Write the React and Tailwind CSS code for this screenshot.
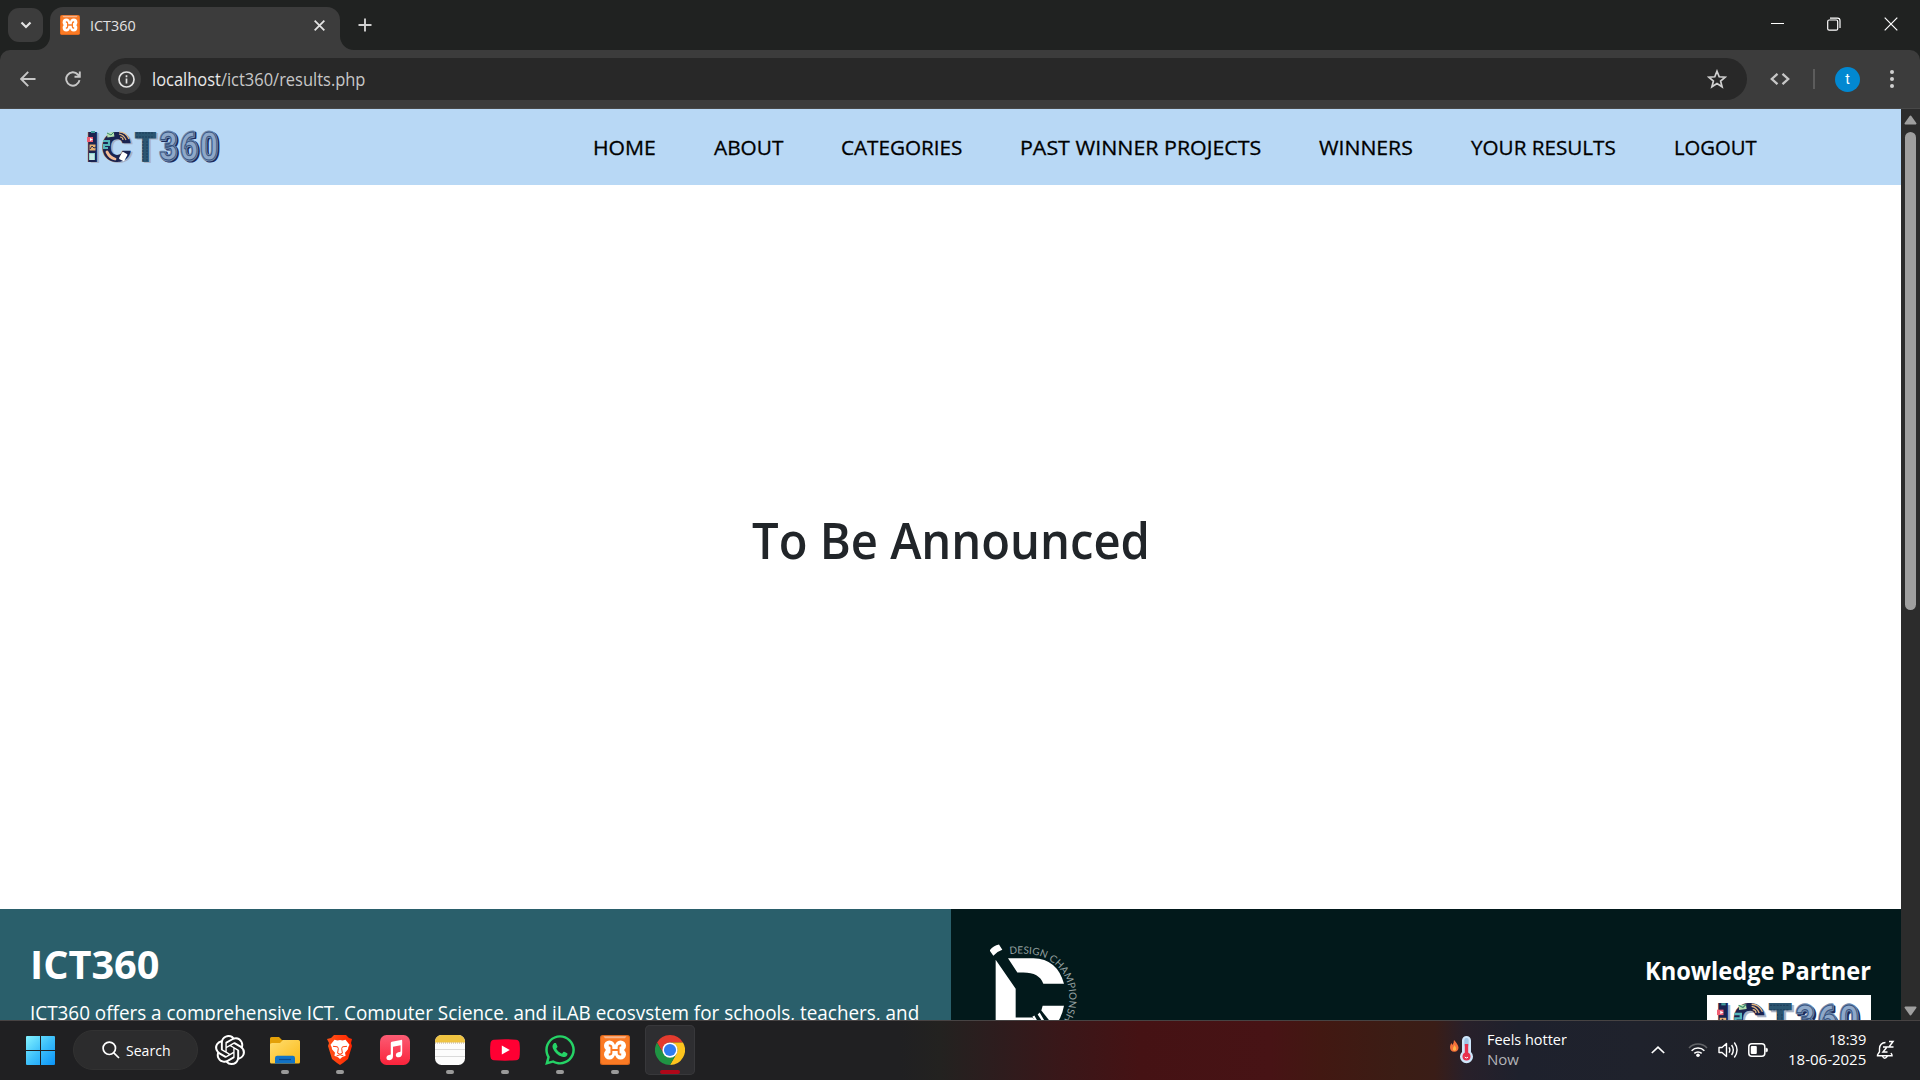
import { useLayoutEffect, useRef, useState } from "react";
import { SiOpenai } from "react-icons/si";
import { FaWhatsapp } from "react-icons/fa";

/* One line of text condensed or widened horizontally to fill its box. */
function Line({ className, children }) {
  const box = useRef(null);
  const text = useRef(null);
  const [scale, setScale] = useState(1);
  useLayoutEffect(() => {
    setScale(box.current.clientWidth / text.current.offsetWidth);
  }, []);
  return (
    <span ref={box} className={`block shrink-0 whitespace-nowrap ${className}`}>
      <span ref={text} className="inline-block origin-left" style={{ transform: `scaleX(${scale})` }}>
        {children}
      </span>
    </span>
  );
}

function XamppIcon({ className }) {
  return (
    <svg viewBox="0 0 30 30" className={`shrink-0 ${className}`}>
      <rect width="30" height="30" rx="2.500" fill="#d9661c" />
      <rect x="1" y="1" width="28" height="28" rx="2" fill="#fb7a24" />
      <path d="M3.500 1.200h23l-1.500 2H5z" fill="#f6b48c" />
      <g fill="#fff">
        <circle cx="9.400" cy="10.800" r="5.400" />
        <circle cx="20.600" cy="10.800" r="5.400" />
        <circle cx="9.400" cy="19.200" r="5.400" />
        <circle cx="20.600" cy="19.200" r="5.400" />
        <rect x="6.500" y="9.500" width="17" height="11" />
      </g>
      <path d="M8.800 10.500h.8q1.800 0 1.800 1.800v5.400q0 1.800-1.800 1.800h-.8M21.200 10.500h-.8q-1.800 0-1.800 1.800v5.400q0 1.800 1.800 1.800h.8M11.500 15h7" fill="none" stroke="#fb7a24" strokeWidth="1.900" />
    </svg>
  );
}

function Digit({ x, children }) {
  const box = { textLength: 18, lengthAdjust: "spacingAndGlyphs" };
  return (
    <g>
      <text x={x + 1.600} y="32" {...box} fill="#1d2b5b" stroke="#1d2b5b" strokeWidth="3.200">{children}</text>
      <text x={x} y="30.500" {...box} fill="#9fb6d2" stroke="#6f8bb0" strokeWidth="3">{children}</text>
      <text x={x} y="30.500" {...box} fill="#8ea8c9" stroke="#35507c" strokeWidth="0.900">{children}</text>
    </g>
  );
}

function BrandLogo({ className }) {
  return (
    <svg viewBox="0 0 134 36" className={`overflow-visible ${className}`} preserveAspectRatio="none">
      <g fontFamily="Inter, sans-serif" fontWeight="900" fontSize="41.500">
        <g fill="#a9b2c4">
          <text x="2" y="34" textLength="12" lengthAdjust="spacingAndGlyphs">I</text>
          <text x="16" y="34" textLength="31" lengthAdjust="spacingAndGlyphs">C</text>
          <text x="49" y="34" textLength="23" lengthAdjust="spacingAndGlyphs">T</text>
        </g>
        <g fill="#1b2450">
          <text x="-1" y="32.500" textLength="13" lengthAdjust="spacingAndGlyphs">I</text>
          <text x="14" y="32.500" textLength="31" lengthAdjust="spacingAndGlyphs">C</text>
        </g>
        <text x="47" y="32.500" textLength="23" lengthAdjust="spacingAndGlyphs" fill="#2b5570">T</text>
      </g>
      <path d="M49 4h18M49 8h18M56 12v20M60 12v20" stroke="#1f3f5c" strokeWidth="1" strokeDasharray="2 1" />
      <rect x="0" y="8" width="6" height="5" fill="#ee5f74" />
      <path d="M3 9l3 1.500-3 1.500z" fill="#fff" />
      <rect x="4" y="2" width="4" height="2" fill="#3f9c9c" />
      <rect x="2.500" y="15.500" width="6" height="6" fill="#e6b071" />
      <path d="M3 20l2-3 2 2 2-1" stroke="#2a3050" fill="none" />
      <rect x="2" y="24" width="6" height="7" fill="#8fd6cf" />
      <path d="M3 26h4M3 28h4M3 30h4" stroke="#fff" strokeWidth="1" />
      <rect x="20" y="3.500" width="7" height="4.500" fill="#b5e0b0" transform="rotate(-8 23 5)" />
      <path d="M20 4l4 2 3-3" stroke="#3f8a70" fill="none" />
      <path d="M32 3q7 0 10 7M32 5q5 1 7 6M33 8q3 0 3 3" stroke="#e3b680" strokeWidth="1.200" fill="none" />
      <path d="M16 12h6v4h-5v3h4" stroke="#54b5b9" strokeWidth="2.200" fill="none" />
      <path d="M20 23q3 6 8 7" stroke="#f2bb96" strokeWidth="2.800" fill="none" strokeLinecap="round" />
      <rect x="33" y="23.500" width="6" height="8" rx="1" fill="#fff" transform="rotate(28 36 28)" />
      <g fontFamily="Roboto, sans-serif" fontWeight="700" fontSize="38" strokeLinejoin="round">
        <Digit x={72.500}>3</Digit>
        <Digit x={93}>6</Digit>
        <Digit x={113}>0</Digit>
      </g>
    </svg>
  );
}

function ChampionshipLogo() {
  return (
    <svg viewBox="150 130 270 230" className="h-[77px] w-[90px] shrink-0">
      <g fill="#fff">
        <path d="M149 152q10-14 28-18l10 16q-16 5-27 18z" />
        <path d="M167 180l60 87v86h50l8 8H167z" />
        <path d="M204 175h76q72 2 92 77h-62q-12-34-60-34h-18z" />
        <path d="M308 318h64q-4 24-16 44h-28l-24-30z" />
        <path d="M293 344l6-6 14 24h-8zM277 351l6-4 8 14h-8z" />
      </g>
      <path id="ring" d="M209 163Q240 159 270 163A126 126 0 0 1 388 290A140 140 0 0 1 340 400" fill="none" />
      <text fontFamily="Lato, sans-serif" fontSize="30" fill="#95a0a0" letterSpacing="0.300">
        <textPath href="#ring">DESIGN CHAMPIONSHIP</textPath>
      </text>
    </svg>
  );
}

function BrowserChrome() {
  return (
    <header className="h-[109px] bg-[#202221]">
      <div className="flex h-[50px] items-start">
        <div className="ml-2 mt-2 flex h-[34px] w-[35px] items-center justify-center rounded-[11px] bg-[#3c3c3c]">
          <svg viewBox="0 0 12 8" className="h-2 w-3"><path d="M1.500 1.500L6 6l4.500-4.500" fill="none" stroke="#e3e3e3" strokeWidth="2.200" /></svg>
        </div>
        <div className="relative ml-[7px] mt-[7px] flex h-[43px] w-[290px] items-center rounded-t-[13px] bg-[#3c3c3c] pb-[7px]">
          <svg viewBox="0 0 14 14" className="absolute -left-[14px] bottom-0 size-[14px]"><path d="M14 0v14H0A14 14 0 0 0 14 0" fill="#3c3c3c" /></svg>
          <svg viewBox="0 0 14 14" className="absolute -right-[14px] bottom-0 size-[14px]"><path d="M0 0v14h14A14 14 0 0 1 0 0" fill="#3c3c3c" /></svg>
          <XamppIcon className="ml-[10px] size-5" />
          <Line className="ml-[10px] w-[46px] text-[15px] leading-5 text-[#e3e3e3]">ICT360</Line>
          <svg viewBox="0 0 10 10" className="ml-auto mr-[15px] size-[11px]"><path d="M.6.6l8.800 8.800M9.400.6L.6 9.400" stroke="#e3e3e3" strokeWidth="1.600" /></svg>
        </div>
        <svg viewBox="0 0 14 14" className="ml-[18px] mt-[18px] size-[14px]"><path d="M7 .5v13M.5 7h13" stroke="#d0d0d0" strokeWidth="1.900" /></svg>
        <div className="ml-auto mr-[22px] mt-[17px] flex items-center">
          <svg viewBox="0 0 13 14" className="mr-[43px] h-[14px] w-[13px]"><path d="M0 6.500h13" stroke="#fff" strokeWidth="1" /></svg>
          <svg viewBox="0 0 14 14" className="mr-[43px] size-[14px]" fill="none" stroke="#fff">
            <rect x=".7" y="3" width="10" height="10.200" rx="1.500" strokeWidth="1.200" />
            <path d="M3 1.200h7.500q2.500 0 2.500 2.500V11" strokeWidth="1.200" />
          </svg>
          <svg viewBox="0 0 14 14" className="size-[14px]"><path d="M.7.7l12.600 12.600M13.300.7L.7 13.300" stroke="#fff" strokeWidth="1.200" /></svg>
        </div>
      </div>
      <div className="flex h-[59px] items-center rounded-t-[10px] border-b border-[#484848] bg-[#3c3c3c]">
        <svg viewBox="0 0 16 16" className="ml-5 size-4" fill="none" stroke="#c7c7c7" strokeWidth="1.900"><path d="M15.500 8H1.500M8.200.9L1.200 8l7 7.100" /></svg>
        <svg viewBox="0 0 16 16" className="ml-[28.500px] size-4" fill="none" stroke="#c7c7c7" strokeWidth="1.900"><path d="M14.500 9.200A6.700 6.700 0 1 1 12.900 3.500L14.600 5.300M14.800.5v5.300H9.500" /></svg>
        <div className="ml-[24.500px] flex h-[42px] w-[1642px] items-center rounded-full bg-[#282828]">
          <div className="ml-[6px] flex size-[30px] items-center justify-center rounded-full bg-[#3c3c3c]">
            <svg viewBox="0 0 17 17" className="size-[17px]" fill="none" stroke="#e3e3e3" strokeWidth="1.700"><circle cx="8.500" cy="8.500" r="7.500" /><path d="M8.500 7.500v5M8.500 4.300v1.900" /></svg>
          </div>
          <Line className="ml-[10.500px] w-[213px] text-[18px] leading-6 text-[#c7c7c7]"><span className="text-[#e8e8e8]">localhost</span>/ict360/results.php</Line>
          <svg viewBox="0 0 20 20" className="ml-auto mr-5 size-5" fill="none" stroke="#d0d0d0" strokeWidth="1.700"><path d="M10 2.200l2.200 5.600 6 .4-4.600 3.800 1.500 5.800L10 14.600l-5.100 3.200 1.500-5.800L1.800 8.200l6-.4z" /></svg>
        </div>
        <svg viewBox="0 0 20 12" className="ml-[23px] h-3 w-5" fill="none" stroke="#c7c7c7" strokeWidth="2.300"><path d="M7.500.8L1.800 6l5.700 5.200M12.500.8L18.200 6l-5.700 5.200" /></svg>
        <div className="ml-[23px] h-5 w-[2px] bg-[#5c5c5c]" />
        <div className="ml-5 flex size-[25px] items-center justify-center rounded-full bg-[#0288d1] font-[Roboto] text-sm leading-none text-white">t</div>
        <div className="ml-[30px] flex flex-col gap-[3px]">
          <i className="size-1 rounded-full bg-[#d0d0d0]" /><i className="size-1 rounded-full bg-[#d0d0d0]" /><i className="size-1 rounded-full bg-[#d0d0d0]" />
        </div>
      </div>
    </header>
  );
}

function Page() {
  return (
    <main className="h-[911px] w-[1901px] overflow-hidden bg-white">
      <nav className="flex h-[76px] items-center bg-[#b8d8f5] text-[20.500px] leading-[30px] text-black [-webkit-text-stroke:0.300px_black]">
        <div className="ml-[87px] [-webkit-text-stroke:0]"><BrandLogo className="h-[36px] w-[134px]" /></div>
        <div className="ml-[372px] flex gap-[58px]">
          <Line className="w-[63px]">HOME</Line>
          <Line className="w-[69px]">ABOUT</Line>
          <Line className="w-[121px]">CATEGORIES</Line>
          <Line className="w-[241px]">PAST WINNER PROJECTS</Line>
          <Line className="w-[94px]">WINNERS</Line>
          <Line className="w-[145px]">YOUR RESULTS</Line>
          <Line className="w-[83px]">LOGOUT</Line>
        </div>
      </nav>
      <section className="flex h-[724px] justify-center pt-[325px]">
        <Line className="w-[398px] text-[50px] font-[550] leading-[60px] text-[#212529]">To Be Announced</Line>
      </section>
      <footer className="flex h-[111px] overflow-hidden text-white">
        <div className="w-[951px] bg-[#2a5f6b] pl-[30px] pt-[31px]">
          <Line className="w-[130px] text-[40px] font-bold leading-[48px]">ICT360</Line>
          <Line className="mt-[10px] w-[889px] text-[20px] leading-[30px]">ICT360 offers a comprehensive ICT, Computer Science, and iLAB ecosystem for schools, teachers, and</Line>
        </div>
        <div className="flex flex-1 items-start justify-between bg-[#02191b] pl-[39px] pr-[30px] pt-[34px]">
          <ChampionshipLogo />
          <div className="flex flex-col items-end pt-[12px]">
            <Line className="w-[226px] text-[25px] font-bold leading-[30px]">Knowledge Partner</Line>
            <div className="mt-[10px] h-[60px] w-[164px] bg-white pl-[10px] pt-[6px]">
              <BrandLogo className="h-[39px] w-[145px]" />
            </div>
          </div>
        </div>
      </footer>
    </main>
  );
}

function ScrollBar() {
  return (
    <div className="flex h-[911px] w-[19px] flex-col items-center bg-[#2c2c2c] pb-1 pt-[6px]">
      <svg viewBox="0 0 13 10" className="h-[10px] w-[13px]"><path d="M6.500 1.500L11.500 8.500H1.500z" fill="#9f9f9f" stroke="#9f9f9f" strokeWidth="2" strokeLinejoin="round" /></svg>
      <div className="mt-[7px] h-[478px] w-[11px] rounded-full bg-[#9f9f9f]" />
      <svg viewBox="0 0 13 10" className="mt-auto h-[10px] w-[13px]"><path d="M1.500 1.500h10l-5 7z" fill="#9f9f9f" stroke="#9f9f9f" strokeWidth="2" strokeLinejoin="round" /></svg>
    </div>
  );
}

function App30({ children, mark, active }) {
  return (
    <div className={`mx-[2.500px] flex h-[50px] w-[50px] flex-col items-center rounded-[5px] pt-[10px] ${active ? "bg-[#2e2e31] ring-1 ring-inset ring-[#38383b]" : ""}`}>
      <div className="flex size-[30px] items-center justify-center">{children}</div>
      {mark && <div className={`mt-[5px] h-1 rounded-full ${active ? "w-5 bg-[#b00719]" : "w-2 bg-[#9a9a9a]"}`} />}
    </div>
  );
}

function Taskbar() {
  return (
    <div className="flex h-[60px] items-center border-t border-[#474343] bg-[linear-gradient(90deg,#202022_0px,#202022_900px,#232220_940px,#2c1d1e_990px,#391719_1060px,#451214_1140px,#471315_1270px,#421812_1320px,#3b1d15_1400px,#3a1d17_1435px,#28202a_1465px,#1e212d_1520px,#1f222c_1640px,#202124_1860px,#202124_1920px)] pb-px text-[15px] leading-5 text-white">
      <svg viewBox="0 0 29 29" className="ml-[26px] size-[29px]">
        <defs><linearGradient id="win" x1="0" y1="0" x2="1" y2="1"><stop offset="0" stopColor="#84f3ff" /><stop offset=".5" stopColor="#3dc0fb" /><stop offset="1" stopColor="#0a94f8" /></linearGradient></defs>
        <path fill="url(#win)" d="M1 0H14V14H0V1Q0 0 1 0M15 0H28Q29 0 29 1V14H15zM0 15H14V29H1Q0 29 0 28zM15 15H29V28Q29 29 28 29H15z" />
      </svg>
      <div className="ml-[18px] flex h-10 w-[125px] items-center rounded-full border border-[#323232] bg-[#2c2c2d]">
        <svg viewBox="0 0 18 18" className="ml-[28px] size-[18px]" fill="none" stroke="#fff" strokeWidth="1.700"><circle cx="7.300" cy="7.300" r="6.200" /><path d="M11.800 11.800L17 17" /></svg>
        <Line className="ml-[6px] w-[45px]">Search</Line>
      </div>
      <div className="ml-[4.500px] flex">
        <App30><SiOpenai className="size-[30px]" /></App30>
        <App30 mark>
          <svg viewBox="0 0 30 30" className="size-[30px]">
            <defs><linearGradient id="fold" x1="0" y1="0" x2="1" y2="1"><stop offset="0" stopColor="#ffdd70" /><stop offset="1" stopColor="#fbba17" /></linearGradient></defs>
            <path d="M0 3.500Q0 2 1.500 2H9l3 3h16v7H0z" fill="#e3a008" />
            <path d="M0 9.500Q0 8 2 8h8l3-3h15.500Q30 5 30 6.500V27q0 1.500-1.500 1.500h-27Q0 28.500 0 27z" fill="url(#fold)" />
            <path d="M5 28.500V23q0-2.200 2.200-2.200h15.600Q25 20.800 25 23v5.500z" fill="#1273c6" /><path d="M9 24.500h12" stroke="#0b4a8e" strokeWidth="1.200" />
          </svg>
        </App30>
        <App30 mark>
          <svg viewBox="0 0 30 30" className="size-[30px]">
            <defs><linearGradient id="lion"><stop stopColor="#ff5419" /><stop offset="1" stopColor="#ff2500" /></linearGradient></defs>
            <path d="M9 0h12l3 3 3 1-1 4 1 3-4 13-5 4-3 2-3-2-5-4L3 11l1-3-2-4 4-1z" fill="url(#lion)" />
            <path d="M9.500 4.800l3 .7 2.500-.6 2.500.6 3-.7 4 5-1.200 2.500-.3 2-3 3.500.6 3-3.600 1.400-2 1.800-2-1.800-3.600-1.400.6-3-3-3.500-.3-2-1.200-2.500z" fill="#fff" />
            <path d="M8 11.300l4.500.5.800 1.800-.7 4.600 2.400 1 2.400-1-.7-4.600.8-1.800 4.500-.5M11.500 21l3.500-1.300 3.500 1.300" fill="none" stroke="#ff4010" strokeWidth="1" />
          </svg>
        </App30>
        <App30>
          <svg viewBox="0 0 30 30" className="size-[30px]">
            <defs><linearGradient id="mus" x1="0" y1="0" x2="0" y2="1"><stop stopColor="#fb5c74" /><stop offset="1" stopColor="#fa233b" /></linearGradient></defs>
            <rect width="30" height="30" rx="6.500" fill="url(#mus)" />
            <path d="M10.800 8Q10.800 7 11.800 6.700L21 4.900Q22.200 4.700 22.200 5.800V18q0 4-3.400 4.300-3 .1-3-2.400 0-2 2.400-2.600l1.600-.4q.8-.2.800-1V10.200l-7.600 1.600V21q0 3.900-3.600 4.200-3 0-3-2.500 0-2 2.400-2.600l1.400-.4q.6-.2.600-1z" fill="#fff" />
          </svg>
        </App30>
        <App30 mark>
          <svg viewBox="0 0 30 30" className="size-[30px]">
            <defs><clipPath id="note"><rect width="30" height="30" rx="6.500" /></clipPath></defs>
            <g clipPath="url(#note)"><rect width="30" height="30" fill="#fcfcfc" /><rect width="30" height="7.500" fill="#efc341" /><path d="M0 8h30" stroke="#b9a88b" strokeDasharray="1 1" /><path d="M0 14.500h30M0 21.500h30" stroke="#dadada" /></g>
          </svg>
        </App30>
        <App30 mark>
          <svg viewBox="0 0 30 30" className="size-[30px]"><path d="M4 4.700q11-1 22 0 3 .3 3.500 3.300.8 7 0 14-.5 3-3.500 3.300-11 .7-22 0-3-.3-3.500-3.300-.8-7 0-14Q1 5 4 4.700z" fill="#ff0033" /><path d="M11.800 10.500l8 4.500-8 4.500z" fill="#fff" /></svg>
        </App30>
        <App30 mark><FaWhatsapp className="size-[34px] shrink-0 text-[#25d366]" /></App30>
        <App30 mark><XamppIcon className="size-[30px]" /></App30>
        <App30 mark active>
          <svg viewBox="0 0 48 48" className="size-[30px]">
            <path d="M3.215 12A24 24 0 0 1 44.785 12H24A12 12 0 0 0 13.608 30z" fill="#e33b2e" />
            <path d="M44.785 12A24 24 0 0 1 24 48L34.392 30A12 12 0 0 0 24 12z" fill="#fcc41d" />
            <path d="M3.215 12L13.608 30A12 12 0 0 0 34.392 30L24 48A24 24 0 0 1 3.215 12z" fill="#1f9443" />
            <circle cx="24" cy="24" r="12.200" fill="#fff" /><circle cx="24" cy="24" r="9.700" fill="#2f7cf0" />
          </svg>
        </App30>
      </div>
      <svg viewBox="0 0 24 30" className="ml-auto h-[30px] w-6">
        <path d="M4 5Q8 9 8.500 12.500q0 4-4.200 4.300Q0 16.500 0 12q0-2 1.500-4l.8 2Q4 8 4 5z" fill="#f4703a" /><path d="M4.500 10q2 2.500 1.500 5-1.500 1.500-3 0-.5-2 1.500-5z" fill="#ffb547" />
        <path d="M12 5.500a4.500 4.500 0 0 1 9 0V17a6.500 6.500 0 1 1-9 0z" fill="#cfe6fb" />
        <rect x="14.300" y="3" width="4.400" height="9" rx="2" fill="#9fc4e6" /><rect x="14.800" y="9" width="3.400" height="12" fill="#e8304e" /><circle cx="16.500" cy="21.500" r="4" fill="#e8304e" /><path d="M14.800 22q1.200 2 3.200.2" stroke="#fff" fill="none" />
      </svg>
      <div className="ml-[13px] w-[80px] pb-[3px]">
        <Line className="w-[80px]">Feels hotter</Line>
        <Line className="w-[32px] text-[#b3b4b8]">Now</Line>
      </div>
      <svg viewBox="0 0 14 8" className="ml-[84px] h-2 w-[14px]"><path d="M.8 7L7 1.200 13.200 7" fill="none" stroke="#fff" strokeWidth="1.700" /></svg>
      <svg viewBox="0 0 20 16" className="ml-[23px] h-4 w-5" fill="none" stroke="#fff" strokeWidth="1.500">
        <path d="M1 6A12.200 12.200 0 0 1 19 6" stroke="#626468" /><path d="M3.600 8.700a9 9 0 0 1 12.800 0M6.300 11.400a5.300 5.300 0 0 1 7.400 0" /><circle cx="10" cy="13.300" r="1.800" fill="#fff" stroke="none" />
      </svg>
      <svg viewBox="0 0 21 18" className="ml-[10px] h-[18px] w-[21px]" fill="none" stroke="#fff" strokeWidth="1.400">
        <path d="M1 6.500h3L8.500 2.500v13L4 11.500H1z" strokeLinejoin="round" /><path d="M11 6.300q1.700 2.700 0 5.400M13.600 4q3.400 5 0 10M16.300 1.500q5.500 7.500 0 15" />
      </svg>
      <svg viewBox="0 0 20 14" className="ml-[9px] h-[14px] w-5"><rect x=".8" y=".8" width="16" height="12.400" rx="3" fill="none" stroke="#fff" strokeWidth="1.500" /><rect x="2.800" y="3" width="6" height="8" rx="1" fill="#fff" /><path d="M17.800 5q2 0 2 2t-2 2z" fill="#fff" stroke="#fff" strokeWidth=".5" /></svg>
      <div className="ml-[19.500px] flex w-[78.500px] flex-col items-end pb-[3px]">
        <Line className="w-[37px]">18:39</Line>
        <Line className="w-[78px]">18-06-2025</Line>
      </div>
      <svg viewBox="0 0 19 20" className="ml-[10px] mr-[25px] h-5 w-[19px]" fill="none" stroke="#fff" strokeWidth="1.400">
        <path d="M9.500 2.500Q3.800 3 3.500 8.500v3.200L1.500 15v.8h14.500V15l-1-2M6.500 16.200q2 4 5 0" /><path d="M7 7h4l-4 5h4.500M13 1.500h4L13 7h4.500" strokeWidth="1.500" />
      </svg>
    </div>
  );
}

export default function App() {
  return (
    <div className="h-[1080px] w-[1920px] overflow-hidden bg-[#202221] font-['Open_Sans','Noto_Sans',sans-serif]">
      <BrowserChrome />
      <div className="flex">
        <Page />
        <ScrollBar />
      </div>
      <Taskbar />
    </div>
  );
}
